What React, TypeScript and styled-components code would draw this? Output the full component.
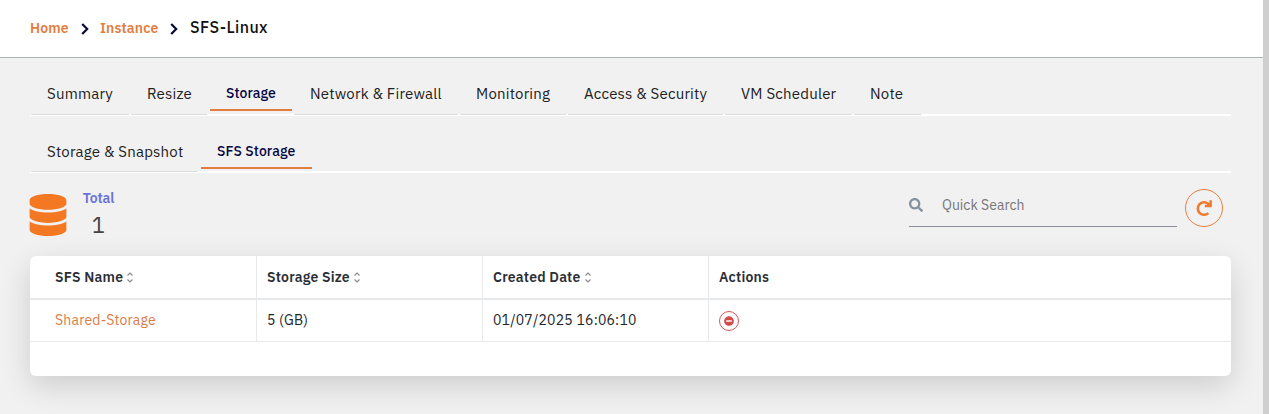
import React from 'react';
import styled, { createGlobalStyle } from 'styled-components';
import { FaDatabase, FaSearch, FaMinusCircle } from 'react-icons/fa';

const GlobalStyle = createGlobalStyle`
  * { box-sizing: border-box; }
  body {
    margin: 0;
    font-family: "IBM Plex Sans", "Noto Sans", sans-serif;
    letter-spacing: 0.2px;
    background: #f1f1f1;
    color: #212529;
  }
`;

const Screen = styled.div`
  display: flex;
  height: 414px;
  overflow: hidden;
`;

const Main = styled.div`
  flex: 1;
  display: flex;
  flex-direction: column;
`;

const Scrollbar = styled.div`
  width: 6px;
  background: #cfcfcf;
`;

const Header = styled.header`
  display: flex;
  align-items: center;
  height: 58px;
  padding: 0 30px 2px;
  background: #fff;
  border-bottom: 1px solid #aeb5b3;
  white-space: nowrap;
`;

const Crumb = styled.a<{ $width: number }>`
  width: ${(p) => p.$width}px;
  font-size: 14px;
  font-weight: 600;
  letter-spacing: 0.15px;
  color: #e27d41;
`;

const CrumbArrow = styled.svg`
  width: 8px;
  height: 12px;
  margin: 3px 11px 0 12px;
`;

const CurrentCrumb = styled.span`
  margin: 0 0 1px 1px;
  font-size: 16px;
  font-weight: 500;
  letter-spacing: 0.4px;
  color: #111;
`;

const Content = styled.main`
  flex: 1;
  padding: 18px 32px 0 30px;
`;

const Tabs = styled.nav<{ $height: number }>`
  display: flex;
  align-items: stretch;
  height: ${(p) => p.$height}px;
  background: linear-gradient(#fff, #fff) bottom / 100% 2px no-repeat;
`;

const Tab = styled.a<{ $width: number; $drop?: number }>`
  display: flex;
  align-items: flex-end;
  width: ${(p) => p.$width}px;
  padding: 0 0 ${(p) => p.$drop ?? 11}px 17px;
  font-size: 15px;
  line-height: 22px;
  white-space: nowrap;
  color: #212121;
  background: linear-gradient(#dcdcdc, #dcdcdc) 1px calc(100% - 1px) / calc(100% - 2px) 1px no-repeat;
`;

const ActiveTab = styled(Tab)<{ $lift: number }>`
  padding: 0 0 5px 16px;
  margin: 0 1px ${(p) => p.$lift}px 2px;
  font-size: 14px;
  font-weight: 500;
  letter-spacing: 0.07px;
  color: #050542;
  background: none;
  border-bottom: 2px solid #e07d3f;
`;

const Toolbar = styled.div`
  display: flex;
  align-items: flex-start;
  height: 83px;
`;

const Total = styled.div`
  display: flex;
  flex: 1;
  padding-top: 21px;
  margin-left: -3px;
  color: #f47721;
`;

const TotalText = styled.div`
  width: 32px;
  margin: -6px 0 0 13.5px;
  text-align: center;
`;

const TotalLabel = styled.div`
  font-size: 14px;
  font-weight: 600;
  line-height: 21px;
  letter-spacing: -0.15px;
  color: #6a74d4;
`;

const TotalValue = styled.div`
  font-size: 22px;
  line-height: 32px;
  color: #444;
`;

const Search = styled.label`
  display: flex;
  align-items: center;
  width: 268px;
  height: 42px;
  margin: 12px 8px 0 0;
  padding-bottom: 2px;
  border-bottom: 1px solid #8c8f9c;
  color: #84909c;
`;

const SearchInput = styled.input`
  width: 200px;
  margin-left: 19px;
  padding: 0;
  border: 0;
  outline: 0;
  background: none;
  font: 14px "IBM Plex Sans", "Noto Sans", sans-serif;
  letter-spacing: 0;
  &::placeholder { color: #777; }
`;

const RefreshButton = styled.button`
  display: grid;
  place-items: center;
  width: 38px;
  height: 38px;
  margin: 16px 8px 0 0;
  padding: 0;
  border: 1px solid #e9803f;
  border-radius: 50%;
  background: none;
  color: #ee7a30;
`;

const Card = styled.section`
  height: 120px;
  background: #fff;
  border-radius: 6px;
  box-shadow: 0 10px 30px rgba(0, 0, 0, 0.15);
`;

const Row = styled.div<{ $head?: boolean }>`
  display: grid;
  grid-template-columns: 227px 226px 226px 1fr;
  height: ${(p) => (p.$head ? 44 : 42)}px;
  border-bottom: ${(p) => (p.$head ? 2 : 1)}px solid #e8e9ea;
  font-weight: ${(p) => (p.$head ? 600 : 400)};
  color: ${(p) => (p.$head ? '#2b2f35' : '#212529')};
`;

const Cell = styled.div<{ $link?: boolean }>`
  display: flex;
  align-items: center;
  padding: 0 10px 1px;
  font-size: 14px;
  white-space: nowrap;
  color: ${(p) => (p.$link ? '#dc7c48' : 'inherit')};
  &:first-child { padding-left: 25px; }
  &:not(:last-child) { border-right: 1px solid #e8e9ea; }
`;

const SortArrows = styled.svg`
  width: 6px;
  height: 11px;
  margin: 2px 0 0 4px;
`;

const DeleteButton = styled.button`
  display: grid;
  place-items: center;
  width: 20px;
  height: 20px;
  margin-top: 2px;
  padding: 0;
  border: 1px solid #d0585a;
  border-radius: 50%;
  background: none;
  color: #d24a4a;
`;

const Arrow = () => (
  <CrumbArrow viewBox="0 0 8 12">
    <path d="M1.2 1 6.2 6 1.2 11" fill="none" stroke="#0b0838" strokeWidth="2.2" />
  </CrumbArrow>
);

const Sort = () => (
  <SortArrows viewBox="0 0 6 11">
    <path d="M.5 3.5 3 1 5.5 3.5M.5 7.5 3 10 5.5 7.5" fill="none" stroke="#8c8c8c" strokeWidth="1.2" />
  </SortArrows>
);

const RefreshIcon = () => (
  <svg width="18" height="18" viewBox="0 0 18 18" fill="none" stroke="currentColor" strokeWidth="2.5">
    <path d="M13.4 14.2A6.3 6.3 0 1 1 13 4.6L15.2 6.8M15.6 1.2V7H9.8" />
  </svg>
);

export default function App() {
  return (
    <>
      <GlobalStyle />
      <Screen>
        <Main>
          <Header>
            <Crumb $width={39}>Home</Crumb>
            <Arrow />
            <Crumb $width={58}>Instance</Crumb>
            <Arrow />
            <CurrentCrumb>SFS-Linux</CurrentCrumb>
          </Header>
          <Content>
            <Tabs $height={40}>
              <Tab $width={100}>Summary</Tab>
              <Tab $width={78}>Resize</Tab>
              <ActiveTab $width={82} $lift={5}>Storage</ActiveTab>
              <Tab $width={166}>Network &amp; Firewall</Tab>
              <Tab $width={108}>Monitoring</Tab>
              <Tab $width={157}>Access &amp; Security</Tab>
              <Tab $width={129}>VM Scheduler</Tab>
              <Tab $width={69}>Note</Tab>
            </Tabs>
            <Tabs $height={57}>
              <Tab $width={169} $drop={10}>Storage &amp; Snapshot</Tab>
              <ActiveTab $width={111} $lift={4}>SFS Storage</ActiveTab>
            </Tabs>
            <Toolbar>
              <Total>
                <FaDatabase size={42} />
                <TotalText>
                  <TotalLabel>Total</TotalLabel>
                  <TotalValue>1</TotalValue>
                </TotalText>
              </Total>
              <Search>
                <FaSearch size={14} />
                <SearchInput placeholder="Quick Search" />
              </Search>
              <RefreshButton aria-label="Refresh">
                <RefreshIcon />
              </RefreshButton>
            </Toolbar>
            <Card>
              <Row $head>
                <Cell>SFS Name<Sort /></Cell>
                <Cell>Storage Size<Sort /></Cell>
                <Cell>Created Date<Sort /></Cell>
                <Cell>Actions</Cell>
              </Row>
              <Row>
                <Cell $link>Shared-Storage</Cell>
                <Cell>5 (GB)</Cell>
                <Cell>01/07/2025 16:06:10</Cell>
                <Cell>
                  <DeleteButton aria-label="Delete">
                    <FaMinusCircle size={10} />
                  </DeleteButton>
                </Cell>
              </Row>
            </Card>
          </Content>
        </Main>
        <Scrollbar />
      </Screen>
    </>
  );
}
